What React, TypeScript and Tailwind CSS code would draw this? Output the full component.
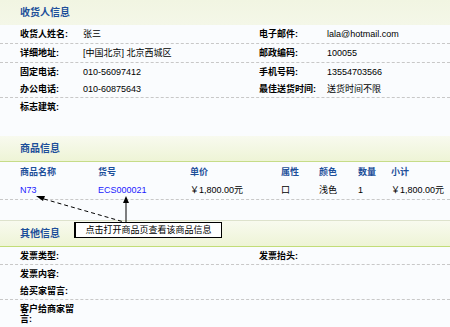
import React from "react";

const font = { fontFamily: '"Liberation Sans", "Noto Sans CJK SC", sans-serif' };

function Header({ title, first, third }: { title: string; first?: boolean; third?: boolean }) {
  return (
    <div
      className={
        "flex items-center pl-[20px] bg-gradient-to-b " +
        (first
          ? "h-[25px] from-[#f1f5e2] to-[#f4f7e8]"
          : third
          ? "h-[27px] from-[#f8faef] to-[#eef4d6] border-t border-t-[#dde2cc] border-b border-b-[#c2dd78]"
          : "h-[26px] from-[#f8faef] to-[#eef4d6] border-b border-b-[#c6dc88]")
      }
    >
      <span className="text-[10px] font-bold text-[#1d4f9a] leading-none">{title}</span>
    </div>
  );
}

function Row({
  h,
  dashed,
  l1,
  v1,
  l2,
  v2,
}: {
  h: string;
  dashed?: boolean;
  l1: string;
  v1?: string;
  l2?: string;
  v2?: string;
}) {
  return (
    <div className={"flex items-center text-[9px] leading-[10px] text-black " + h + (dashed ? " border-b border-dashed border-[#c8c8c8]" : "")}>
      <div className="w-[83px] pl-[20px] font-bold shrink-0">{l1}</div>
      <div className="w-[176px] shrink-0">{v1}</div>
      <div className="w-[68px] font-bold shrink-0">{l2}</div>
      <div className="flex-1">{v2}</div>
    </div>
  );
}

export default function App() {
  return (
    <div className="relative w-[450px] h-[327px] overflow-hidden bg-[#fafcfe]" style={font}>
      <Header title="收货人信息" first />
      <Row h="h-[19px]" dashed l1="收货人姓名:" v1="张三" l2="电子邮件:" v2="lala@hotmail.com" />
      <Row h="h-[19px]" dashed l1="详细地址:" v1="[中国北京] 北京西城区" l2="邮政编码:" v2="100055" />
      <Row h="h-[17px]" l1="固定电话:" v1="010-56097412" l2="手机号码:" v2="13554703566" />
      <Row h="h-[18px]" dashed l1="办公电话:" v1="010-60875643" l2="最佳送货时间:" v2="送货时间不限" />
      <Row h="h-[18px]" l1="标志建筑:" />
      <div className="h-[20px]" />
      <Header title="商品信息" />
      <div className="flex items-center h-[21px] text-[9px] font-bold text-[#1d4f9a]">
        <div className="w-[98px] pl-[20px]">商品名称</div>
        <div className="w-[92px]">货号</div>
        <div className="w-[91px]">单价</div>
        <div className="w-[38px]">属性</div>
        <div className="w-[39px]">颜色</div>
        <div className="w-[33px]">数量</div>
        <div className="flex-1">小计</div>
      </div>
      <div className="flex items-center h-[17px] text-[9px] text-black border-b border-dashed border-[#c8c8c8]">
        <div className="w-[98px] pl-[20px] text-[#1a1aff]">N73</div>
        <div className="w-[92px] text-[#1a1aff]">ECS000021</div>
        <div className="w-[91px]">￥1,800.00元</div>
        <div className="w-[38px]">口</div>
        <div className="w-[39px]">浅色</div>
        <div className="w-[33px]">1</div>
        <div className="flex-1">￥1,800.00元</div>
      </div>
      <div className="h-[20px]" />
      <Header title="其他信息" third />
      <Row h="h-[18px]" dashed l1="发票类型:" l2="发票抬头:" />
      <Row h="h-[17px]" l1="发票内容:" />
      <Row h="h-[18px]" dashed l1="给买家留言:" />
      <div className="flex text-[9px] leading-[10px] pt-[4px]">
        <div className="w-[80px] pl-[20px] font-bold text-black shrink-0">客户给商家留言:</div>
      </div>

      <svg className="absolute left-0 top-0" width="450" height="327" viewBox="0 0 450 327">
        <line x1="44" y1="199" x2="124" y2="222" stroke="#000" strokeWidth="1" strokeDasharray="4 3" />
        <polygon points="36,196 45,196 43,201" fill="#000" />
        <line x1="126" y1="203" x2="126" y2="222" stroke="#000" strokeWidth="1" />
        <polygon points="126,196 123,203 129,203" fill="#000" />
      </svg>
      <div className="absolute left-[74px] top-[222px] w-[148px] h-[16px] bg-white border border-black border-l-2 flex items-center justify-center text-[9px] leading-none text-black">
        点击打开商品页查看该商品信息
      </div>
    </div>
  );
}
